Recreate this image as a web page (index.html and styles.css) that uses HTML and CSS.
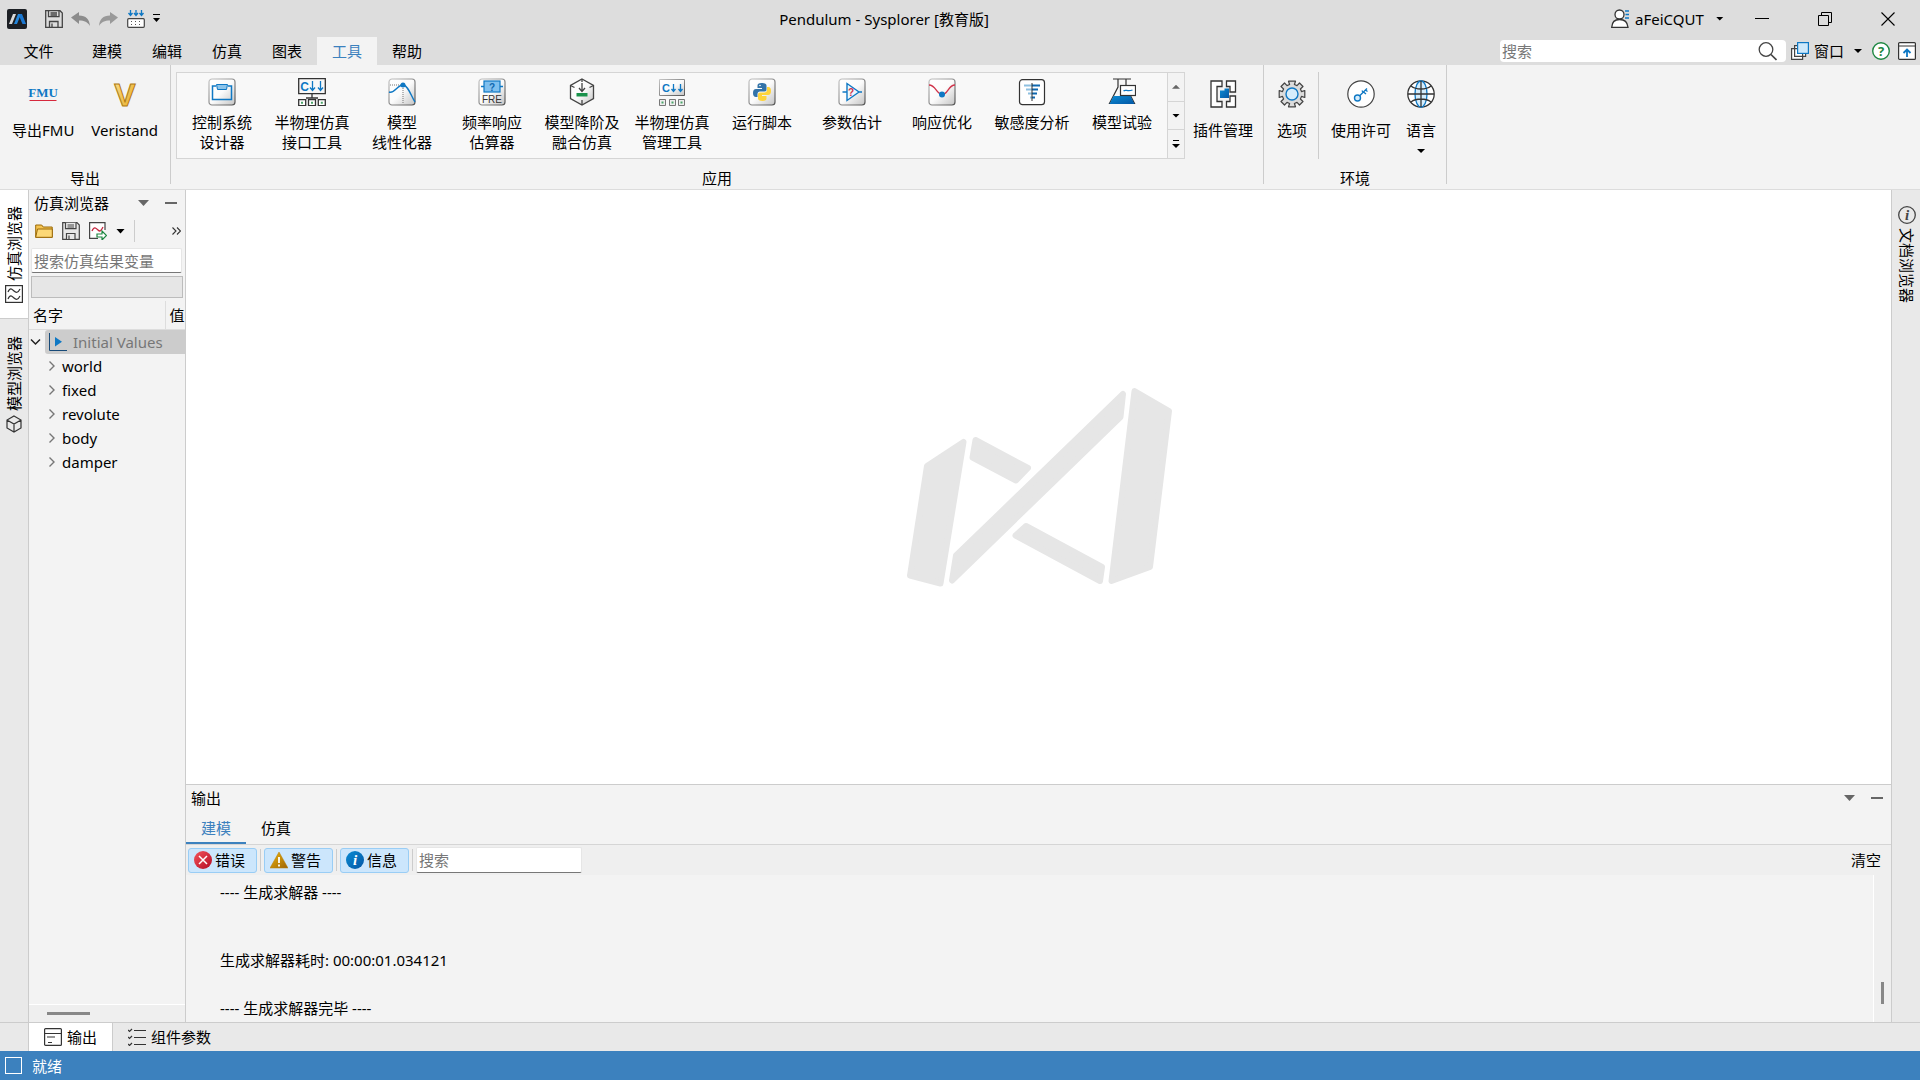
FILE: index.html
```
<!DOCTYPE html>
<html lang="zh-CN">
<head>
<meta charset="utf-8">
<title>Pendulum - Sysplorer [教育版]</title>
<link rel="stylesheet" href="styles.css">
</head>
<body>
<svg class="defs" width="0" height="0" aria-hidden="true">
  <defs>
    <linearGradient id="plate" x1="0" y1="0" x2="1" y2="1"><stop offset="0" stop-color="#fff"/><stop offset=".5" stop-color="#fbfbfb"/><stop offset="1" stop-color="#c4c4c4"/></linearGradient>
    <linearGradient id="rim" x1="0" y1="0" x2="1" y2="1"><stop offset="0" stop-color="#c4c4c4"/><stop offset="1" stop-color="#555"/></linearGradient>
    <linearGradient id="gold" x1="0" y1="0" x2="1" y2="1"><stop offset="0" stop-color="#ffe08a"/><stop offset="1" stop-color="#e2a51d"/></linearGradient>
    <linearGradient id="blue" x1="0" y1="0" x2="1" y2="1"><stop offset="0" stop-color="#0a8bd3"/><stop offset="1" stop-color="#0457a5"/></linearGradient>
    <linearGradient id="red" x1="0" y1="0" x2="1" y2="1"><stop offset="0" stop-color="#f4545c"/><stop offset="1" stop-color="#b30c24"/></linearGradient>
    <linearGradient id="amber" x1="0" y1="0" x2="1" y2="1"><stop offset="0" stop-color="#efb407"/><stop offset="1" stop-color="#9c6407"/></linearGradient>
    <symbol id="tile" viewBox="0 0 28 28"><rect x="1" y="1" width="26" height="26" rx="3" fill="url(#plate)" stroke="url(#rim)" stroke-width="1.2"/></symbol>
  </defs>
</svg>

<header class="titlebar">
  <div class="quick">
    <svg class="app-logo" width="20" height="20" viewBox="0 0 20 20"><rect width="20" height="20" rx="2" fill="#1c1f24"/><path d="M2 15 6 5h3L5 15z" fill="#d9d9d9"/><path d="M7 15 11 5h3l-4 10z" fill="#2386dc"/><path d="M13 5h2l4 10h-3.500l-3-7z" fill="#1b77d0"/></svg>
    <button class="tool" aria-label="保存"><svg width="18" height="18" viewBox="0 0 18 18" fill="none" stroke="#444" stroke-width="1.300"><path d="M.7.7h14.300l2.300 2.300v14.300H.7z"/><path d="M3.500.7v6h10.500v-6M5.500 3h6.500M5.500 5h6.500M4.500 17v-5.500h8.500V17M7 17v-3.500"/></svg></button>
    <button class="tool" aria-label="撤销"><svg width="20" height="16" viewBox="0 0 20 16"><path d="M0 6.500 8 1v3.500c7 0 10.500 4 11 10.500C16.500 11 13.500 9.500 8 9.500V13z" fill="#8c8c8c"/></svg></button>
    <button class="tool" aria-label="重做"><svg width="20" height="16" viewBox="0 0 20 16"><path d="M19 6.500 11 1v3.500C4 4.500.5 8.500 0 15c2.500-4 5.500-5.500 11-5.500V13z" fill="#999"/></svg></button>
    <button class="tool" aria-label="仿真"><svg width="18" height="18" viewBox="0 0 18 18" fill="none"><path d="M3.500 0v5M9 0v5M14.500 0v5M1.500 3l2 2.500 2-2.500M7 3l2 2.500L11 3M12.500 3l2 2.500 2-2.500" stroke="#0f78c4" stroke-width="1.300"/><rect x=".7" y="8.700" width="16.600" height="8.600" rx="1" fill="#fff" stroke="#444" stroke-width="1.200"/><path d="M4 11.500h11M4 14.500h11" stroke="#555" stroke-dasharray="1 3"/></svg></button>
    <button class="tool" aria-label="自定义"><svg width="7" height="9" viewBox="0 0 7 9"><path d="M0 .5h7" stroke="#000"/><path d="M0 4h7L3.500 8z"/></svg></button>
  </div>
  <h1 class="title">Pendulum - Sysplorer [教育版]</h1>
  <div class="account">
    <button class="user"><svg width="18" height="19" viewBox="0 0 18 19" fill="#fff" stroke="#333" stroke-width="1.300"><path d="M.7 18.300C1 13 4 10.500 8.500 10.500S16.500 13 17 18.300z"/><circle cx="8.500" cy="5.500" r="4.500"/><path d="M14 2h4M14.500 5.500H18M14 9h4" stroke="#0f78c4"/></svg>aFeiCQUT<span class="caret"></span></button>
    <button class="win" aria-label="最小化"><svg width="14" height="14" viewBox="0 0 14 14" stroke="#000"><path d="M0 6.500h14"/></svg></button>
    <button class="win" aria-label="还原"><svg width="14" height="14" viewBox="0 0 14 14" fill="none" stroke="#000"><path d="M.5 3.500h10v10H.5zM3.500 3.500v-3h10v10h-3"/></svg></button>
    <button class="win" aria-label="关闭"><svg width="14" height="14" viewBox="0 0 14 14" stroke="#000" stroke-width="1.100"><path d="M.5.5l13 13M13.500.5l-13 13"/></svg></button>
  </div>
</header>

<nav class="menubar">
  <button class="menu file">文件</button><button class="menu">建模</button><button class="menu">编辑</button><button class="menu">仿真</button><button class="menu">图表</button><button class="menu active">工具</button><button class="menu">帮助</button>
  <div class="menu-right">
    <label class="find"><input type="text" placeholder="搜索" aria-label="搜索"><svg width="19" height="19" viewBox="0 0 19 19" fill="none" stroke="#444" stroke-width="1.300"><circle cx="8" cy="7.500" r="6.800"/><path d="M13 12.500l5.500 5.500" stroke-width="1.700"/></svg></label>
    <button class="window-menu"><svg width="18" height="18" viewBox="0 0 18 18" stroke="#444" fill="#fff" stroke-width="1.200"><path d="M.6 6.600h11v10.800H.6zM3.600 3.600h11v10.800h-11z"/><rect x="6.600" y=".6" width="10.800" height="10.800" fill="#cfe9fb" stroke="#0f78c4"/></svg>窗口<span class="caret"></span></button>
    <button class="tool" aria-label="帮助"><svg width="18" height="18" viewBox="0 0 18 18"><circle cx="9" cy="9" r="8.300" fill="#fff" stroke="#1e8742" stroke-width="1.400"/><text x="9" y="14" text-anchor="middle" class="glyph-help">?</text></svg></button>
    <button class="tool" aria-label="折叠功能区"><svg width="18" height="18" viewBox="0 0 18 18" fill="none"><rect x=".6" y=".6" width="16.800" height="16.800" rx="1" fill="#fff" stroke="#333" stroke-width="1.200"/><path d="M1 4h16" stroke="#333"/><path d="M9 15V7.500M5.500 11 9 7.500l3.500 3.500" stroke="#0f78c4" stroke-width="1.800"/></svg></button>
  </div>
</nav>

<section class="ribbon">
  <div class="group">
    <div class="group-body export">
      <button class="big"><svg class="lettered" width="32" height="28" viewBox="0 0 32 28"><text x="16" y="17" text-anchor="middle" class="glyph-fmu">FMU</text><path d="M2.500 20.500h27" stroke="#d6283c"/></svg>导出FMU</button>
      <button class="big"><svg class="lettered" width="28" height="28" viewBox="0 0 28 28"><text x="14" y="26" text-anchor="middle" class="glyph-v">V</text></svg>Veristand</button>
    </div>
    <div class="group-name">导出</div>
  </div>
  <div class="group">
    <div class="group-body apps">
      <div class="gallery">
        <button class="app"><svg width="28" height="28" viewBox="0 0 28 28"><use href="#tile"/><path d="M8 8H4.500v13.500h19V8H20" fill="none" stroke="#0f78c4" stroke-width="1.500"/><path d="M8.500 6.500h11l-1 5h-9z" fill="#8dc4ea" stroke="#0f78c4"/></svg>控制系统<br>设计器</button>
        <button class="app"><svg width="28" height="28" viewBox="0 0 28 28" fill="none" stroke="#333" stroke-width="1.300"><path d="M.7.700h26.600v15H.7zM14 16v4M8 20h12"/><path d="M.7 21.700h7v6h-7zM10.500 21.700h7v6h-7zM20.300 21.700h7v6h-7z" fill="#fff"/><path d="M3 24.700h2M13 24.700h2M22.800 24.700h2" stroke="#4ba66a" stroke-width="2"/><path d="M14.500 3v9M12 9.500l2.500 3 2.500-3M22.500 3v9M20 9.500l2.500 3 2.500-3" stroke="#0f78c4"/><text x="6.500" y="13" text-anchor="middle" class="glyph-c">C</text></svg>半物理仿真<br>接口工具</button>
        <button class="app"><svg width="28" height="28" viewBox="0 0 28 28" fill="none"><use href="#tile"/><path d="M2 7h12M15 8v18" stroke="#777" stroke-dasharray="1 1"/><path d="M1 14c6 2 8-7 14-7 5 0 8 11 12 17" stroke="#0f78c4" stroke-width="1.400"/><circle cx="15" cy="7" r="2.500" fill="#0f78c4"/></svg>模型<br>线性化器</button>
        <button class="app"><svg width="28" height="28" viewBox="0 0 28 28" fill="none"><use href="#tile"/><rect x="6" y="3" width="16" height="11" fill="#7fc0ef" stroke="#0f78c4" stroke-width="1.200"/><path d="M3 8.500h3M22 8.500h3" stroke="#0f78c4" stroke-width="1.300"/><text x="14" y="12.500" text-anchor="middle" class="glyph-q">?</text><text x="14" y="25" text-anchor="middle" class="glyph-fre">FRE</text></svg>频率响应<br>估算器</button>
        <button class="app"><svg width="28" height="28" viewBox="0 0 28 28" fill="none" stroke="#444" stroke-width="1.300"><path d="M14 1l11.500 6.500v13L14 27 2.500 20.500v-13z" fill="url(#plate)"/><path d="M2.500 7.500l4 2M25.500 7.500l-4 2M14 22v5M14 1v3M14 5v8M11 10l3 3.500 3-3.500"/><path d="M8.500 15h11v3.500h-11z" fill="#19924b" stroke="none"/></svg>模型降阶及<br>融合仿真</button>
        <button class="app"><svg width="28" height="28" viewBox="0 0 28 28" fill="none"><path d="M1.500 1.500h25v16h-25z" fill="url(#plate)" stroke="url(#rim)"/><path d="M1.500 21.500h6v6h-6zM11.500 21.500h6v6h-6zM20.500 21.500h6v6h-6z" fill="#eee" stroke="#777"/><path d="M3.500 24.500h2M13.500 24.500h2M22.500 24.500h2" stroke="#4ba66a" stroke-width="2"/><path d="M15.500 6v7M13.500 11l2 2.500 2-2.500M22.500 6v7M20.500 11l2 2.500 2-2.500" stroke="#0f78c4" stroke-width="1.300"/><text x="8" y="13.500" text-anchor="middle" class="glyph-c2">C</text></svg>半物理仿真<br>管理工具</button>
        <button class="app"><svg width="28" height="28" viewBox="0 0 28 28"><use href="#tile"/><path d="M13.500 5c-3 0-4 1-4 2.500V10H14v1H8c-2 0-3 1.500-3 4s1 4 3 4h1.500v-3c0-1.500 1-2.500 2.500-2.500h4.500c1.500 0 2-1 2-2V7.500C18.500 6 17 5 13.500 5z" fill="#3474a8"/><path d="M14.500 23c3 0 4-1 4-2.500V18H14v-1h6c2 0 3-1.500 3-4s-1-4-2.500-4h-1.500v3c0 1.500-1 2.500-2.500 2.500H12c-1.500 0-2 1-2 2v4c0 1.500 1.500 2.500 4.500 2.500z" fill="#ffd43b"/><circle cx="12" cy="7.500" r=".8" fill="#fff"/></svg>运行脚本</button>
        <button class="app"><svg width="28" height="28" viewBox="0 0 28 28" fill="none"><use href="#tile"/><path d="M9 5.500v17L21 14zM4.500 14H9M21 14h3" stroke="#0f78c4" stroke-width="1.400" fill="#eef7fd"/><text x="13" y="18" text-anchor="middle" class="glyph-qr">?</text></svg>参数估计</button>
        <button class="app"><svg width="28" height="28" viewBox="0 0 28 28" fill="none"><use href="#tile"/><path d="M1 7c7 0 7 9 13 9.500C20 17 20 7 27 7" stroke="#d0334a" stroke-width="1.300"/><circle cx="14" cy="16.500" r="3" fill="#0f78c4"/></svg>响应优化</button>
        <button class="app"><svg width="28" height="28" viewBox="0 0 28 28" fill="none"><rect x="1.500" y="1.700" width="25" height="25" rx="3" fill="#fff" stroke="#333" stroke-width="1.200"/><path d="M6 7.500h9M8 11.500h6M10 15.500h4M12 19.500h2" stroke="#8dbfe0" stroke-width="1.800"/><path d="M14 7.500h8M14 11.500h6M14 15.500h5M14 19.500h3" stroke="#0f68b0" stroke-width="1.800"/><path d="M14 5v18" stroke="#333"/></svg>敏感度分析</button>
        <button class="app"><svg width="28" height="28" viewBox="0 0 28 28" fill="none" stroke="#333" stroke-width="1.200"><path d="M5 1h18M10 1v8L1.500 25.500h25L18 9V1" fill="#f7f7f7"/><path d="M5.500 18h17l4 8h-25z" fill="url(#blue)" stroke="none"/><rect x="12.500" y="7.500" width="15" height="10" fill="#fff"/><path d="M15.500 13c2-2 4 1 9-1" stroke="#0f78c4"/></svg>模型试验</button>
        <div class="spinner">
          <button class="step dim" aria-label="上移"><span class="caret up"></span></button>
          <button class="step" aria-label="下移"><span class="caret"></span></button>
          <button class="step" aria-label="更多"><svg width="8" height="8" viewBox="0 0 8 8"><path d="M1 .5h6" stroke="#000"/><path d="M0 4h8L4 8z"/></svg></button>
        </div>
      </div>
      <button class="big"><svg width="28" height="28" viewBox="0 0 28 28" fill="none" stroke="#333" stroke-width="1.300"><path d="M13 1H2v26h11v-5.500H8v-15h5zM17.500 1H26.500v11H21V6.500h-3.500zM17.500 27h9V16H21v5.500h-3.500z" fill="#fff"/><path d="M11 10.500h4.500v-2H20v9.500h-9z" fill="url(#blue)" stroke="none"/></svg>插件管理</button>
    </div>
    <div class="group-name">应用</div>
  </div>
  <div class="group">
    <div class="group-body env">
      <button class="big options"><svg width="28" height="28" viewBox="0 0 28 28"><path d="M11.600 4.500 10.500 1.200h7l-1.100 3.300 2.600 1.100L21.500 3l3.500 3.500-2.600 2.500 1.100 2.600 3.300-1.100v7l-3.300-1.100-1.100 2.600 2.600 2.500L21.500 25l-2.500-2.600-2.600 1.100 1.100 3.300h-7l1.100-3.300L9 22.400 6.500 25 3 21.500 5.600 19l-1.100-2.600-3.300 1.100v-7l3.300 1.100L5.600 9 3 6.500 6.500 3 9 5.600z" fill="#dcdcdc" stroke="#444" stroke-width="1.200" stroke-linejoin="round"/><circle cx="14" cy="14" r="6" fill="#d5edfc" stroke="#0f78c4" stroke-width="1.400"/></svg>选项</button>
      <button class="big"><svg width="28" height="28" viewBox="0 0 28 28" fill="none"><circle cx="14" cy="14" r="13.200" fill="#fff" stroke="#444" stroke-width="1.200"/><circle cx="10.500" cy="18" r="3" fill="#d5edfc" stroke="#0f78c4" stroke-width="1.400"/><path d="M12.700 15.800 20 8.500M16.500 12l2.500 2M18.500 10l2 1.500M16 12.500l-1-2" stroke="#0f78c4" stroke-width="1.300"/></svg>使用许可</button>
      <button class="big language"><svg width="28" height="28" viewBox="0 0 28 28" fill="none" stroke="#333" stroke-width="1.300"><circle cx="14" cy="14" r="13.200" fill="#fff"/><ellipse cx="14" cy="14" rx="6" ry="13" fill="#d5edfc" stroke="#0f78c4"/><path d="M14 1v26M1 14h26M4 6c5 4 15 4 20 0M4 22c5-4 15-4 20 0"/></svg>语言<span class="caret"></span></button>
    </div>
    <div class="group-name">环境</div>
  </div>
</section>

<main class="workspace">
  <aside class="rail left">
    <button class="side-tab active"><svg width="18" height="18" viewBox="0 0 18 18" fill="none" stroke="#333" stroke-width="1.200"><rect x=".6" y=".6" width="16.800" height="16.800"/><path d="M3 7c2-5 4-3 6-1s4 2 6-2M3 14c2-5 4-3 6-1s4 2 6-2"/></svg><span class="upward">仿真浏览器</span></button>
    <button class="side-tab"><svg width="18" height="18" viewBox="0 0 18 18" fill="none" stroke="#333" stroke-width="1.200"><path d="M9 1l7 4v8l-7 4-7-4V5zM2 5l7 4 7-4M9 9v8"/></svg><span class="upward">模型浏览器</span></button>
  </aside>

  <section class="browser">
    <div class="panel-head"><h2>仿真浏览器</h2><button class="tool" aria-label="菜单"><span class="caret grey"></span></button><button class="tool" aria-label="收起"><span class="dash"></span></button></div>
    <div class="browser-tools">
      <button class="tool" aria-label="打开"><svg width="18" height="18" viewBox="0 0 18 18"><path d="M.7 15.300V3h6l1.500 2h9v10.300z" fill="#f5c451" stroke="#9a6a0a"/><path d="M.7 15.300 2.500 7h14.800v8.300z" fill="#fcd877" stroke="#9a6a0a"/></svg></button>
      <button class="tool" aria-label="保存"><svg width="18" height="18" viewBox="0 0 18 18" fill="#e8e8e8" stroke="#444" stroke-width="1.200"><path d="M.7.7h14.300l2.300 2.300v14.300H.7z"/><path d="M3.500.7v6h10.500v-6M5.500 3h6.500M5.500 5h6.500M4.500 17v-5.500h8.500V17M7 17v-3.500"/></svg></button>
      <button class="tool" aria-label="导出曲线"><svg width="18" height="18" viewBox="0 0 18 18" fill="none"><path d="M16 8V.6H.6v15.800H9" fill="#fff" stroke="#444" stroke-width="1.200"/><path d="M3 9c2-5 4-3 6-1s3 1 5-3" stroke="#c62840" stroke-width="1.300"/><path d="M8 12h5V9l4.500 4.500L13 18v-3H8z" fill="#fff" stroke="#1e8742" stroke-width="1.200"/></svg></button>
      <span class="caret"></span><span class="divider"></span>
      <button class="tool overflow" aria-label="更多"><svg width="9" height="8" viewBox="0 0 9 8" fill="none" stroke="#333" stroke-width="1.100"><path d="M.5.500 4 4 .5 7.500M5 .500 8.500 4 5 7.500"/></svg></button>
    </div>
    <input class="field" type="text" placeholder="搜索仿真结果变量" aria-label="搜索仿真结果变量">
    <div class="progress"></div>
    <div class="table-wrap">
      <table class="vars">
        <thead><tr><th class="name">名字</th><th>值</th></tr></thead>
        <tbody>
          <tr class="root"><td colspan="2"><div class="node"><svg width="12" height="12" viewBox="0 0 12 12" fill="none" stroke="#222" stroke-width="1.500"><path d="M1 3.500l4.500 4.500L10 3.500"/></svg><span class="selected"><svg width="18" height="18" viewBox="0 0 18 18"><path d="M.5 0v17.500H18" fill="none" stroke="#174a78"/><path d="M6 4v9.500L13 8.700z" fill="#0f78c4"/></svg>Initial Values</span></div></td></tr>
          <tr><td colspan="2"><div class="node leaf"><svg width="8" height="12" viewBox="0 0 8 12" fill="none" stroke="#777" stroke-width="1.400"><path d="M1.500 1.500 6 6l-4.500 4.500"/></svg>world</div></td></tr>
          <tr><td colspan="2"><div class="node leaf"><svg width="8" height="12" viewBox="0 0 8 12" fill="none" stroke="#777" stroke-width="1.400"><path d="M1.500 1.500 6 6l-4.500 4.500"/></svg>fixed</div></td></tr>
          <tr><td colspan="2"><div class="node leaf"><svg width="8" height="12" viewBox="0 0 8 12" fill="none" stroke="#777" stroke-width="1.400"><path d="M1.500 1.500 6 6l-4.500 4.500"/></svg>revolute</div></td></tr>
          <tr><td colspan="2"><div class="node leaf"><svg width="8" height="12" viewBox="0 0 8 12" fill="none" stroke="#777" stroke-width="1.400"><path d="M1.500 1.500 6 6l-4.500 4.500"/></svg>body</div></td></tr>
          <tr><td colspan="2"><div class="node leaf"><svg width="8" height="12" viewBox="0 0 8 12" fill="none" stroke="#777" stroke-width="1.400"><path d="M1.500 1.500 6 6l-4.500 4.500"/></svg>damper</div></td></tr>
        </tbody>
      </table>
    </div>
    <div class="hscroll"><span class="thumb"></span></div>
  </section>

  <section class="center">
    <div class="canvas">
      <svg width="266" height="200" viewBox="905 387 266 200" fill="#e6e6e6" stroke="#e6e6e6" stroke-width="6" stroke-linejoin="round"><path d="M926 466l36.500-24L939.500 583.500 909 575.500z"/><path d="M974.500 440l52.500 28-12 12.500-43.500-23z"/><path d="M1122 394l-2.500 23L951 580.500l4-25z"/><path d="M1133.500 391l34.500 20-19 156-38.500 14z"/><path d="M1025 526l76 41-2 14-84.500-45.500z"/></svg>
    </div>
    <section class="output">
      <div class="panel-head"><h2>输出</h2><button class="tool" aria-label="菜单"><span class="caret grey"></span></button><button class="tool" aria-label="收起"><span class="dash"></span></button></div>
      <div class="tabs"><button class="tab active">建模</button><button class="tab">仿真</button></div>
      <div class="filters">
        <button class="filter"><svg width="18" height="18" viewBox="0 0 18 18"><circle cx="9" cy="9" r="9" fill="url(#red)"/><path d="M5 5l8 8M13 5l-8 8" stroke="#fff" stroke-width="1.500"/></svg>错误</button><span class="divider"></span>
        <button class="filter"><svg width="18" height="18" viewBox="0 0 18 18"><path d="M9 1l9 16H0z" fill="url(#amber)" stroke="#b87f08" stroke-width=".5"/><path d="M9 6v6M9 13.500v2" stroke="#fff" stroke-width="1.800"/></svg>警告</button><span class="divider"></span>
        <button class="filter"><svg width="18" height="18" viewBox="0 0 18 18"><circle cx="9" cy="9" r="9" fill="url(#blue)"/><text x="9" y="14" text-anchor="middle" class="glyph-i">i</text></svg>信息</button><span class="divider"></span>
        <input class="field" type="text" placeholder="搜索" aria-label="搜索输出">
        <button class="clear">清空</button>
      </div>
      <div class="log-area">
        <div class="log"><p>---- 生成求解器 ----</p><p class="far">生成求解器耗时: 00:00:01.034121</p><p class="near">---- 生成求解器完毕 ----</p></div>
        <div class="vscroll"><span class="thumb"></span></div>
      </div>
    </section>
  </section>

  <aside class="rail right">
    <button class="doc-tab"><svg width="18" height="18" viewBox="0 0 18 18"><circle cx="9" cy="9" r="8.300" fill="none" stroke="#444" stroke-width="1.300"/><text x="9" y="14" text-anchor="middle" class="glyph-i dark">i</text></svg><span class="downward">文档浏览器</span></button>
  </aside>
</main>

<nav class="dockbar">
  <button class="dock active"><svg width="18" height="18" viewBox="0 0 18 18" fill="none" stroke="#333" stroke-width="1.200"><rect x=".6" y=".6" width="16.800" height="16.800" rx="1"/><path d="M1 5.500h16M3 9h8M4 14.500h4"/></svg>输出</button>
  <button class="dock"><svg width="18" height="18" viewBox="0 0 18 18" fill="none" stroke="#333" stroke-width="1.200"><path d="M6 2.500h12M6 9.500h12M6 16.500h12M0 2l1.500 1.500L4 1M0 9l1.500 1.500L4 8M0 16l1.500 1.500L4 15"/></svg>组件参数</button>
</nav>
<footer class="status"><span class="state"></span>就绪</footer>
</body>
</html>
```
FILE: styles.css
```
* { box-sizing: border-box; }

body {
  margin: 0;
  min-height: 100vh;
  display: flex;
  flex-direction: column;
  background: #f3f3f3;
  color: #000;
  font: 15px/20px "Noto Sans", "Noto Sans CJK SC", sans-serif;
}

button, input { font: inherit; color: inherit; }
button { border: 0; padding: 0; background: none; white-space: nowrap; }
h1, h2, p { margin: 0; font-size: 15px; font-weight: 400; }
svg { flex: none; }
.defs { position: absolute; }
.tool { display: flex; align-items: center; justify-content: center; }

.caret { flex: none; width: 8px; height: 4px; background: #000; clip-path: polygon(0 0, 100% 0, 50% 100%); }
.caret.up { background: #666; clip-path: polygon(50% 0, 100% 100%, 0 100%); }
.caret.grey { width: 11px; height: 6px; background: #666; }
.dash { width: 12px; height: 2px; background: #666; }
.divider { width: 1px; height: 22px; background: #ccc; }

/* Title bar */
.titlebar { display: flex; align-items: center; height: 37px; background: #ddd; }
.quick { display: flex; align-items: center; gap: 8px; width: 163px; padding-left: 7px; }
.app-logo { margin-right: 10px; }
.title { flex: 1; text-align: center; }
.account { display: flex; align-items: center; width: 315px; height: 37px; }
.user { display: flex; align-items: center; gap: 6px; width: 125px; padding-left: 6px; }
.user .caret { margin-left: 6px; }
.win { display: flex; align-items: center; justify-content: center; width: 63px; height: 37px; }

/* Menu tabs */
.menubar { display: flex; height: 28px; background: #ddd; }
.menu { width: 60px; }
.menu.file { width: 77px; }
.menu.active { background: #f3f3f3; color: #3c81be; }
.menu-right { display: flex; align-items: center; gap: 8px; margin-left: auto; padding-right: 4px; }
.find { display: flex; align-items: center; width: 286px; height: 22px; padding: 0 9px 0 2px; border-radius: 4px; background: #fff; }
.find input { flex: 1; min-width: 0; padding: 0; border: 0; background: none; }
input::placeholder { color: #777; opacity: 1; }
.window-menu { display: flex; align-items: center; gap: 5px; margin-left: -3px; }
.window-menu .caret { margin: 0 2px 0 5px; }

/* Ribbon */
.ribbon { display: flex; height: 125px; border-bottom: 1px solid #dcdcdc; }
.group { display: flex; flex-direction: column; height: 119px; border-right: 1px solid #ccc; }
.group-body { flex: none; display: flex; height: 93px; padding-top: 7px; }
.group-name { padding-top: 10px; text-align: center; }
.export { width: 170px; gap: 17px; padding-left: 12px; }
.big { display: flex; flex-direction: column; align-items: center; gap: 12px; height: 87px; padding-top: 8px; }
.big .caret { margin-top: -3px; }
.lettered { overflow: visible; }
.apps { gap: 8px; padding-left: 5px; padding-right: 10px; }
.gallery { display: flex; height: 87px; border: 1px solid #d5d5d5; background: #f8f8f8; }
.app { align-self: flex-start; width: 90px; padding-top: 5px; text-align: center; }
.app svg { display: block; margin: 0 auto 6px; }
.spinner { display: flex; flex-direction: column; width: 17px; border-left: 1px solid #d5d5d5; background: #f3f3f3; }
.step { flex: 1; display: flex; align-items: center; justify-content: center; border-top: 1px solid #d5d5d5; }
.step.dim { border-top: 0; }
.env { gap: 12px; padding: 7px 7px 0 13px; }
.options { padding-right: 11px; border-right: 1px solid #ccc; }
.language { width: 36px; }

/* Workspace */
.workspace { flex: 1; display: flex; min-height: 0; }
.rail { flex: none; width: 29px; background: #e9e9e9; }
.rail.left { border-right: 1px solid #ccc; }
.rail.right { border-left: 1px solid #ccc; }
.side-tab { display: flex; flex-direction: column-reverse; align-items: center; justify-content: flex-start; gap: 4px; width: 28px; height: 129px; padding-bottom: 15px; padding-right: 1px; }
.side-tab.active { background: #fff; border-bottom: 1px solid #ccc; }
.upward, .downward { writing-mode: vertical-rl; text-orientation: sideways; }
.upward { transform: rotate(180deg); }
.doc-tab { display: flex; flex-direction: column; align-items: center; gap: 4px; width: 28px; padding-top: 16px; padding-left: 2px; }

.browser { flex: none; display: flex; flex-direction: column; width: 157px; border-right: 1px solid #ccc; }
.panel-head { display: flex; align-items: center; gap: 16px; height: 28px; padding: 0 8px 2px 5px; }
.panel-head h2 { flex: 1; }
.browser-tools { display: flex; align-items: center; gap: 9px; height: 26px; padding: 0 4px 0 6px; }
.browser-tools .caret { width: 9px; height: 5px; }
.overflow { margin-left: auto; }
.field { padding: 0 2px; border: 1px solid #e6e6e6; border-bottom-color: #777; border-radius: 2px; background: #fff; }
.browser .field { height: 25px; margin: 4px 3px 0 2px; }
.progress { height: 22px; margin: 3px 2px 0; border: 1px solid #bcbcbc; background: #e6e6e6; }
.table-wrap { flex: 1; margin-top: 3px; overflow: hidden; }
.vars { table-layout: fixed; width: 100%; border-collapse: collapse; }
.vars th { height: 28px; padding: 0 0 0 4px; border-bottom: 1px solid #ddd; text-align: left; font-weight: 400; white-space: nowrap; }
.vars .name { width: 136px; border-right: 1px solid #ddd; }
.vars td { height: 24px; padding: 0; }
.node { display: flex; align-items: center; gap: 3px; height: 24px; padding-left: 1px; }
.leaf { gap: 6px; padding-left: 19px; }
.selected { flex: 1; display: flex; align-items: center; gap: 6px; height: 24px; padding-left: 4px; border-radius: 3px 0 0 3px; background: #ccc; color: #777; white-space: nowrap; }
.hscroll { height: 18px; padding: 7px 0 0 18px; border-top: 1px solid #fff; background: #efefef; }
.hscroll .thumb { display: block; width: 43px; height: 3px; background: #888; }

.center { flex: 1; display: flex; flex-direction: column; min-width: 0; }
.canvas { flex: 1; display: flex; align-items: center; justify-content: center; background: #fff; }
.output { height: 238px; display: flex; flex-direction: column; border-top: 1px solid #ccc; }
.tabs { display: flex; height: 32px; border-bottom: 1px solid #d5d5d5; }
.tab { width: 60px; border-bottom: 2px solid transparent; }
.tab.active { border-bottom-color: #3c81be; color: #3c81be; }
.filters { display: flex; align-items: center; gap: 3px; height: 30px; padding: 0 10px 0 2px; background: #efefef; }
.filter { display: flex; align-items: center; gap: 3px; width: 69px; height: 25px; padding-left: 5px; border: 1px solid #99cdf5; border-radius: 3px; background: #cce6fc; }
.filters .field { width: 166px; height: 26px; }
.clear { margin-left: auto; }
.log-area { flex: 1; display: flex; min-height: 0; }
.log { flex: 1; padding: 7px 0 0 34px; overflow: hidden; }
.far { margin-top: 48px; }
.near { margin-top: 28px; }
.vscroll { width: 18px; padding: 107px 0 0 7px; border-left: 1px solid #fff; background: #efefef; }
.vscroll .thumb { display: block; width: 3px; height: 22px; background: #888; }

/* Bottom bars */
.dockbar { display: flex; height: 29px; padding-left: 28px; border-top: 1px solid #ccc; background: #e9e9e9; }
.dock { display: flex; align-items: center; gap: 5px; padding: 0 15px; border-right: 1px solid #ccc; }
.dock.active { border-left: 1px solid #ccc; background: #fff; }
.dock:last-child { border-right: 0; }
.status { display: flex; align-items: center; gap: 10px; height: 29px; padding-left: 5px; background: #3c81be; color: #fff; }
.state { width: 17px; height: 17px; border: 1px solid #fff; }

/* Lettering inside icons */
.glyph-help { font: 700 13px "Noto Sans", sans-serif; fill: #1e8742; }
.glyph-fmu { font: 700 13px "Liberation Serif", serif; fill: #0f78c4; }
.glyph-v { font: 700 32px "Liberation Sans", sans-serif; fill: url(#gold); stroke: #b07a10; }
.glyph-c, .glyph-c2 { font: 700 12px "Liberation Sans", sans-serif; fill: #0f78c4; stroke: none; }
.glyph-c2 { font-size: 11px; }
.glyph-q, .glyph-qr { font: 700 10px "Liberation Sans", sans-serif; fill: #0f68b0; }
.glyph-qr { fill: #d0334a; }
.glyph-fre { font: 10px "Liberation Sans", sans-serif; fill: #333; }
.glyph-i { font: italic 700 15px "Liberation Serif", serif; fill: #fff; }
.glyph-i.dark { fill: #444; }
```
